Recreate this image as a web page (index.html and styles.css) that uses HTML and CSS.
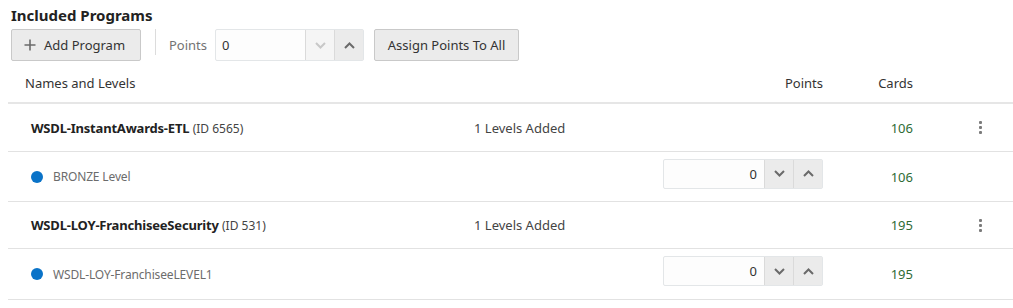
FILE: index.html
```html
<!DOCTYPE html>
<html>
<head>
<meta charset="utf-8">
<link rel="stylesheet" href="styles.css">
</head>
<body>
<div class="page">
  <h2 class="title">Included Programs</h2>
  <div class="toolbar">
    <button class="btn btn-add">
      <svg class="plus" width="12" height="12" viewBox="0 0 12 12"><path d="M6 0.5v11M0.5 6h11" stroke="#6b6b6b" stroke-width="1.6" fill="none"/></svg>
      <span>Add Program</span>
    </button>
    <span class="sep"></span>
    <label class="pts-label">Points</label>
    <div class="spin spin-left">
      <div class="spin-field">0</div>
      <div class="spin-btn disabled"><svg width="11" height="7" viewBox="0 0 11 7"><path d="M1 1l4.5 4.5L10 1" stroke="currentColor" stroke-width="2" fill="none"/></svg></div>
      <div class="spin-btn"><svg width="11" height="7" viewBox="0 0 11 7"><path d="M1 6l4.5-4.5L10 6" stroke="currentColor" stroke-width="2" fill="none"/></svg></div>
    </div>
    <button class="btn btn-assign">Assign Points To All</button>
  </div>

  <div class="table">
    <div class="row head">
      <div class="c-name">Names and Levels</div>
      <div class="c-lv"></div>
      <div class="c-pts">Points</div>
      <div class="c-cards">Cards</div>
      <div class="c-menu"></div>
    </div>

    <div class="row group">
      <div class="c-name"><b>WSDL-InstantAwards-ETL</b> <span class="id">(ID 6565)</span></div>
      <div class="c-lv">1 Levels Added</div>
      <div class="c-pts"></div>
      <div class="c-cards num">106</div>
      <div class="c-menu"><span class="kebab"><i></i><i></i><i></i></span></div>
    </div>
    <div class="row level">
      <div class="c-name"><span class="dot"></span><span class="lvname">BRONZE Level</span></div>
      <div class="c-lv"></div>
      <div class="c-pts">
        <div class="spin spin-row">
          <div class="spin-field right">0</div>
          <div class="spin-btn"><svg width="11" height="7" viewBox="0 0 11 7"><path d="M1 1l4.5 4.5L10 1" stroke="currentColor" stroke-width="2" fill="none"/></svg></div>
          <div class="spin-btn"><svg width="11" height="7" viewBox="0 0 11 7"><path d="M1 6l4.5-4.5L10 6" stroke="currentColor" stroke-width="2" fill="none"/></svg></div>
        </div>
      </div>
      <div class="c-cards num">106</div>
      <div class="c-menu"></div>
    </div>

    <div class="row group group-b">
      <div class="c-name"><b>WSDL-LOY-FranchiseeSecurity</b> <span class="id">(ID 531)</span></div>
      <div class="c-lv">1 Levels Added</div>
      <div class="c-pts"></div>
      <div class="c-cards num">195</div>
      <div class="c-menu"><span class="kebab"><i></i><i></i><i></i></span></div>
    </div>
    <div class="row level level-b">
      <div class="c-name"><span class="dot"></span><span class="lvname">WSDL-LOY-FranchiseeLEVEL1</span></div>
      <div class="c-lv"></div>
      <div class="c-pts">
        <div class="spin spin-row">
          <div class="spin-field right">0</div>
          <div class="spin-btn"><svg width="11" height="7" viewBox="0 0 11 7"><path d="M1 1l4.5 4.5L10 1" stroke="currentColor" stroke-width="2" fill="none"/></svg></div>
          <div class="spin-btn"><svg width="11" height="7" viewBox="0 0 11 7"><path d="M1 6l4.5-4.5L10 6" stroke="currentColor" stroke-width="2" fill="none"/></svg></div>
        </div>
      </div>
      <div class="c-cards num">195</div>
      <div class="c-menu"></div>
    </div>
  </div>
</div>
</body>
</html>
```

FILE: styles.css
```css
* { box-sizing: border-box; }
html, body { margin: 0; padding: 0; background: #fff; }
body {
  font-family: "Noto Sans", "Open Sans", "DejaVu Sans", sans-serif;
  font-size: 13px;
  color: #333;
}
.page { padding: 0 0 0 8px; }
.title {
  margin: 0;
  padding: 4px 0 0 3px;
  height: 29px;
  font-size: 15px;
  font-weight: bold;
  color: #222;
  line-height: 22px;
}
.toolbar {
  display: flex;
  align-items: center;
  height: 32px;
  padding-left: 3px;
}
.btn {
  font-family: inherit;
  font-size: 13px;
  color: #333;
  height: 32px;
  background: #ebebeb;
  border: 1px solid #c9c9c9;
  border-radius: 2px;
  display: flex;
  align-items: center;
  padding: 0 12px;
}
.btn-add { width: 130px; padding-left: 12px; gap: 8px; }
.plus { display: block; }
.sep {
  width: 1px;
  height: 26px;
  background: #dcdcdc;
  margin: 0 13px 0 14px;
  align-self: flex-start;
}
.pts-label { color: #737373; margin-right: 8px; }
.spin {
  display: flex;
  height: 32px;
  border: 1px solid #e3e6e8;
  border-radius: 2px;
  background: #fdfdfd;
}
.spin-left { width: 149px; margin-right: 10px; }
.spin-field {
  flex: 1;
  display: flex;
  align-items: center;
  padding-left: 6px;
  color: #333;
}
.spin-field.right { justify-content: flex-end; padding: 0 7px 0 0; }
.spin-btn {
  width: 29px;
  display: flex;
  align-items: center;
  justify-content: center;
  background: #ebebeb;
  border-left: 1px solid #dadada;
  color: #6a6a6a;
}
.spin-btn.disabled { background: #f5f5f5; color: #c8c8c8; }
.spin-btn svg { display: block; }
.btn-assign { width: 145px; justify-content: center; padding: 0; }

.row {
  display: grid;
  grid-template-columns: 466px 189px 160px 90px 1fr;
  align-items: center;
  border-bottom: 1px solid #e2e2e2;
}
.row.head { height: 43px; padding-top: 3px; border-bottom-width: 2px; border-bottom-color: #e6e6e6; }
.row.group { height: 48px; }
.row.group-b { height: 47px; }
.row.level { height: 50px; }
.row.level-b { height: 51px; }
.c-name { padding-left: 17px; }
.group .c-name { padding-left: 23px; color: #222; }
.group .c-name b { font-weight: bold; font-size: 13px; letter-spacing: -0.2px; }
.group .c-name .id { color: #444; font-size: 12px; }
.level .c-name { padding-left: 23px; display: flex; align-items: center; }
.dot {
  width: 12px; height: 12px; border-radius: 50%;
  background: #0a73c8;
  margin-right: 10px;
}
.lvname { color: #6c6c6c; font-size: 12px; letter-spacing: -0.15px; }
.c-lv { color: #444; }
.c-pts { text-align: right; display: flex; justify-content: flex-end; }
.spin-row { width: 160px; height: 30px; margin-bottom: 6px; }
.c-cards { text-align: right; }
.num { color: #2f6b35; }
.c-menu { padding-left: 66px; }
.kebab { display: flex; flex-direction: column; gap: 2px; width: 3px; }
.kebab i { display: block; width: 3px; height: 3px; background: #7b7b7b; border-radius: 1px; }
```
